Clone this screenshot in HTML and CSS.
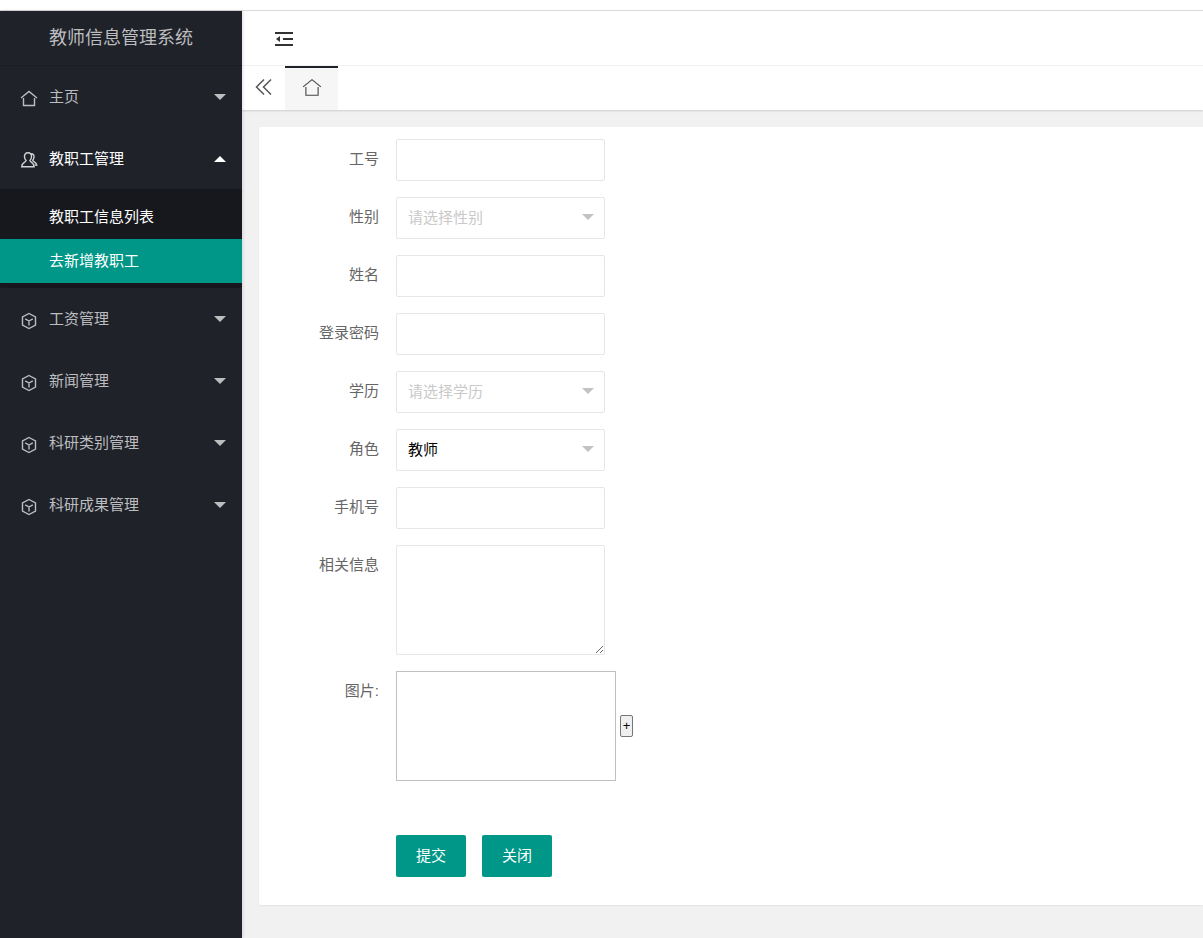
FILE: index.html
```html
<!DOCTYPE html>
<html lang="zh-CN">
<head>
<meta charset="utf-8">
<title>教师信息管理系统</title>
<link rel="stylesheet" href="styles.css">
</head>
<body>
<svg class="sprite" aria-hidden="true">
  <symbol id="home" viewBox="0 0 18 18"><path d="M1 8 9 1.500 17 8M3.500 8v7.500h11V8"/></symbol>
  <symbol id="cube" viewBox="0 0 18 18"><path d="M9 1.500 15.500 5v8L9 16.500 2.500 13V5zM5.200 6.800 9 9l3.800-2.200M9 9v4.500"/></symbol>
  <symbol id="users" viewBox="0 0 18 18"><path d="M8 1.800C5.500 1.800 4.300 3.500 4.500 6c.1 1.600.7 2.600 1.600 3.500C5.800 11.500 2 11 1.700 15.800h12.400C13.800 11 10.200 11.500 9.900 9.500c.9-.9 1.500-1.900 1.600-3.500.2-2.500-1-4.200-3.500-4.200zM11.300 2.800c1.900.1 2.900 1.400 2.700 3.400-.1 1.400-.6 2.300-1.300 3.100.4 1.700 3.500 1.800 4.100 4.800h-2"/></symbol>
</svg>
<div class="app">
  <aside class="side">
    <div class="brand">教师信息管理系统</div>
    <nav class="menu">
      <a class="item" href="#"><svg class="icon"><use href="#home"/></svg><span>主页</span><i class="caret"></i></a>
      <a class="item open" href="#"><svg class="icon"><use href="#users"/></svg><span>教职工管理</span><i class="caret up"></i></a>
      <div class="submenu">
        <a class="subitem" href="#">教职工信息列表</a>
        <a class="subitem active" href="#">去新增教职工</a>
      </div>
      <a class="item" href="#"><svg class="icon"><use href="#cube"/></svg><span>工资管理</span><i class="caret"></i></a>
      <a class="item" href="#"><svg class="icon"><use href="#cube"/></svg><span>新闻管理</span><i class="caret"></i></a>
      <a class="item" href="#"><svg class="icon"><use href="#cube"/></svg><span>科研类别管理</span><i class="caret"></i></a>
      <a class="item" href="#"><svg class="icon"><use href="#cube"/></svg><span>科研成果管理</span><i class="caret"></i></a>
    </nav>
  </aside>
  <div class="main">
    <header class="topbar">
      <button class="fold" type="button" aria-label="折叠菜单">
        <svg class="fold-icon" viewBox="0 0 18 16"><path d="M0 2h18M8 8h10M0 14h18"/><path class="solid" d="M1 8l4-3v6z"/></svg>
      </button>
    </header>
    <div class="tabs">
      <button class="prev" type="button" aria-label="向左">
        <svg class="prev-icon" viewBox="0 0 18 18"><path d="M9 1.500 1.500 9 9 16.500M16 1.500 8.500 9 16 16.500"/></svg>
      </button>
      <a class="tab" href="#" aria-label="主页"><svg class="tab-icon"><use href="#home"/></svg></a>
    </div>
    <main class="content">
      <form class="card">
        <div class="row"><label for="no">工号</label><input class="field" id="no" type="text"></div>
        <div class="row"><label for="sex">性别</label><div class="select"><select class="field empty" id="sex"><option>请选择性别</option></select></div></div>
        <div class="row"><label for="name">姓名</label><input class="field" id="name" type="text"></div>
        <div class="row"><label for="pwd">登录密码</label><input class="field" id="pwd" type="password"></div>
        <div class="row"><label for="edu">学历</label><div class="select"><select class="field empty" id="edu"><option>请选择学历</option></select></div></div>
        <div class="row"><label for="role">角色</label><div class="select"><select class="field" id="role"><option>教师</option></select></div></div>
        <div class="row"><label for="tel">手机号</label><input class="field" id="tel" type="text"></div>
        <div class="row"><label for="info">相关信息</label><textarea class="field area" id="info"></textarea></div>
        <div class="row"><label for="add">图片:</label><div class="upload"><div class="preview"></div><button class="add" id="add" type="button">+</button></div></div>
        <div class="actions"><button class="btn" type="submit">提交</button><button class="btn" type="button">关闭</button></div>
      </form>
    </main>
  </div>
</div>
</body>
</html>
```

FILE: styles.css
```css
* { box-sizing: border-box; }
body {
  margin: 0;
  padding-top: 10px;
  min-height: 100vh;
  display: flex;
  background: #fff;
  color: #666;
  font: 15px/24px "Liberation Sans", "Noto Sans CJK SC", sans-serif;
}
button, input, select, textarea { font: inherit; margin: 0; }
a { color: inherit; text-decoration: none; }
svg { fill: none; stroke: currentColor; }
.sprite { position: absolute; width: 0; height: 0; }
.app { flex: 1; display: flex; border-top: 1px solid #d9d9d9; }

.side {
  flex: 0 0 242px;
  background: #20222a;
  color: #bcbdbf;
  box-shadow: 1px 0 3px rgba(0, 0, 0, .12);
  z-index: 1;
}
.brand {
  height: 55px;
  line-height: 54px;
  text-align: center;
  font-size: 18px;
  border-bottom: 1px solid #1b1d23;
}
.item { display: flex; align-items: center; height: 62px; padding: 0 16px 0 20px; }
.item span { flex: 1; margin-left: 11px; }
.icon { width: 18px; height: 18px; margin-top: 3px; stroke-width: 1.4; }
.open { color: #fff; height: 61px; }
.open .icon { color: #d2d3d4; }
.caret { border: 6px solid transparent; border-top-color: currentColor; border-bottom: 0; }
.caret.up { border-top: 0; border-bottom: 6px solid #fff; }
.submenu { background: #17181d; color: #fff; padding: 6px 0 5px; border-radius: 2px; }
.subitem { display: block; line-height: 44px; padding-left: 49px; }
.active { background: #009688; }

.main { flex: 1; min-width: 0; display: flex; flex-direction: column; background: #f1f1f1; }
.topbar { display: flex; height: 55px; padding: 2px 0 0 33px; background: #fff; border-bottom: 1px solid #f4f4f4; }
.fold, .prev { display: flex; align-items: center; padding: 0; border: 0; background: none; color: #333; }
.fold-icon { width: 18px; height: 16px; stroke-width: 2; }
.solid { fill: currentColor; stroke: none; }
.tabs { display: flex; height: 44px; background: #fff; box-shadow: 0 1px 2px rgba(0, 0, 0, .15); }
.prev { width: 43px; padding-bottom: 2px; justify-content: center; color: #555; }
.prev-icon { width: 18px; height: 18px; stroke-width: 1.5; }
.tab {
  width: 53px;
  padding-bottom: 2px;
  display: flex;
  align-items: center;
  justify-content: center;
  background: #f6f6f6;
  border-top: 2px solid #20222a;
  color: #444;
}
.tab-icon { width: 20px; height: 20px; stroke-width: 1; }

.content { padding: 17px 0 32px 17px; }
.card {
  display: flex;
  flex-direction: column;
  gap: 16px;
  padding: 12px 0 28px 15px;
  background: #fff;
  border-radius: 2px 0 0 2px;
  box-shadow: 0 1px 2px rgba(0, 0, 0, .06);
}
.row { display: flex; }
label { width: 122px; padding: 8px 17px 0 0; text-align: right; }
.field {
  display: block;
  width: 209px;
  height: 42px;
  padding: 0 11px;
  border: 1px solid #e6e6e6;
  border-radius: 2px;
  background: #fff;
  color: #000;
  outline: 0;
  appearance: none;
}
.empty { color: #c9c9c9; }
.area { height: 110px; padding: 6px 11px; resize: vertical; }
.select { position: relative; }
.select::after {
  content: "";
  position: absolute;
  right: 11px;
  top: 17px;
  border: 6px solid transparent;
  border-top-color: #c2c2c2;
  border-bottom: 0;
  pointer-events: none;
}
.upload { display: flex; align-items: center; gap: 4px; }
.preview { width: 220px; height: 110px; border: 1px solid #c0c0c0; }
.add {
  width: 13px;
  height: 22px;
  padding: 0;
  border: 1px solid #767676;
  border-radius: 2px;
  background: #efefef;
  color: #000;
  font-size: 13px;
  line-height: 18px;
}
.actions { display: flex; gap: 16px; padding: 38px 0 0 122px; }
.btn {
  height: 42px;
  padding: 0 20px;
  border: 0;
  border-radius: 2px;
  background: #009688;
  color: #fff;
}
```
